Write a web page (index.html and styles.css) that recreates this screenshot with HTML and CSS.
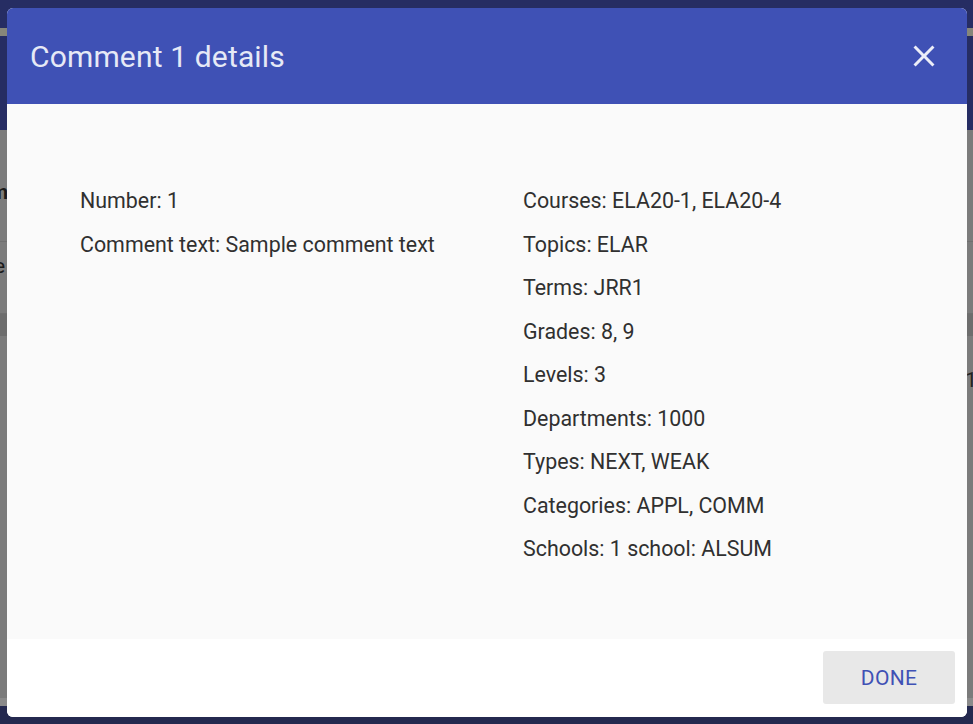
FILE: index.html
```html
<!DOCTYPE html>
<html>
<head>
<meta charset="utf-8">
<link rel="stylesheet" href="styles.css">
</head>
<body>
<div class="page">
  <div class="appbar"><div class="appbar-band"></div></div>
  <div class="content">
    <div class="row row-head"><span class="edge-text bold">m</span></div>
    <div class="row row-line"><span class="edge-text">e</span></div>
    <div class="row row-dark"></div>
    <div class="row row-num"><span class="edge-text right">1</span></div>
  </div>
  <div class="bottombar"></div>
</div>

<div class="dialog">
  <div class="dialog-header">
    <h1 class="dialog-title">Comment 1 details</h1>
    <button class="close-btn" aria-label="Close">
      <svg viewBox="0 0 24 24" width="36" height="36"><path d="M19 6.41L17.59 5 12 10.59 6.41 5 5 6.41 10.59 12 5 17.59 6.41 19 12 13.41 17.59 19 19 17.59 13.41 12z" fill="currentColor"/></svg>
    </button>
  </div>
  <div class="dialog-body">
    <div class="col">
      <p class="item">Number: 1</p>
      <p class="item">Comment text: Sample comment text</p>
    </div>
    <div class="col">
      <p class="item">Courses: ELA20-1, ELA20-4</p>
      <p class="item">Topics: ELAR</p>
      <p class="item">Terms: JRR1</p>
      <p class="item">Grades: 8, 9</p>
      <p class="item">Levels: 3</p>
      <p class="item">Departments: 1000</p>
      <p class="item">Types: NEXT, WEAK</p>
      <p class="item">Categories: APPL, COMM</p>
      <p class="item">Schools: 1 school: ALSUM</p>
    </div>
  </div>
  <div class="dialog-footer">
    <button class="done-btn">DONE</button>
  </div>
</div>
</body>
</html>
```

FILE: styles.css
```css
* { box-sizing: border-box; }
html, body {
  margin: 0;
  padding: 0;
  width: 973px;
  height: 724px;
  overflow: hidden;
  font-family: Roboto, "Noto Sans", Arial, sans-serif;
}
.page {
  display: flex;
  flex-direction: column;
  height: 724px;
  background: #7b7b7b;
}
.appbar {
  height: 130px;
  background: #262d63;
  padding-top: 28px;
}
.appbar-band {
  height: 8px;
  background: #86867a;
}
.content {
  flex: 1;
  display: flex;
  flex-direction: column;
  padding-top: 48px;
}
.row { position: relative; }
.row-head { height: 64px; border-bottom: 1px solid #6f6f6f; }
.row-line { height: 72px; border-bottom: 1px solid #6f6f6f; }
.row-dark { height: 22px; background: #6d6d6d; }
.row-num { height: 60px; }
.edge-text {
  font-size: 21px;
  color: #1a1a1a;
  position: absolute;
  left: -6px;
  top: 12px;
}
.edge-text.bold { font-weight: 700; top: 2px; left: -10px; }
.edge-text.right { left: auto; right: -4px; top: 32px; color: #222; }
.bottombar {
  height: 26px;
  background: #24294f;
  border-top: 8px solid #8a8a8a;
}
.dialog {
  position: absolute;
  left: 7px;
  top: 8px;
  width: 960px;
  height: 709px;
  border-radius: 6px;
  overflow: hidden;
  display: flex;
  flex-direction: column;
  background: #fff;
}
.dialog-header {
  height: 96px;
  flex: none;
  background: #3f51b5;
  display: flex;
  align-items: center;
  justify-content: space-between;
  padding: 0 24px 0 23px;
}
.dialog-title {
  margin: 0;
  font-size: 30px;
  font-weight: 400;
  color: #e6e9f6;
  letter-spacing: 0.15px;
}
.close-btn {
  border: 0;
  background: none;
  padding: 0;
  color: #eceef8;
  width: 36px;
  height: 36px;
  display: flex;
  margin-right: 1px;
}
.dialog-body {
  flex: 1;
  background: #fafafa;
  display: grid;
  grid-template-columns: 443px 1fr;
  padding: 75px 0 0 73px;
}
.item {
  margin: 0;
  font-size: 21.4px;
  line-height: 43.5px;
  color: #303030;
  white-space: nowrap;
}
.dialog-footer {
  height: 78px;
  flex: none;
  background: #fff;
  display: flex;
  justify-content: flex-end;
  align-items: flex-start;
  padding: 12px 12px 0 0;
}
.done-btn {
  width: 132px;
  height: 53px;
  border: 0;
  border-radius: 3px;
  background: #e8e8e8;
  color: #3f51b5;
  font-family: Roboto, "Noto Sans", Arial, sans-serif;
  font-size: 21px;
  font-weight: 400;
  letter-spacing: 0.3px;
}
```
